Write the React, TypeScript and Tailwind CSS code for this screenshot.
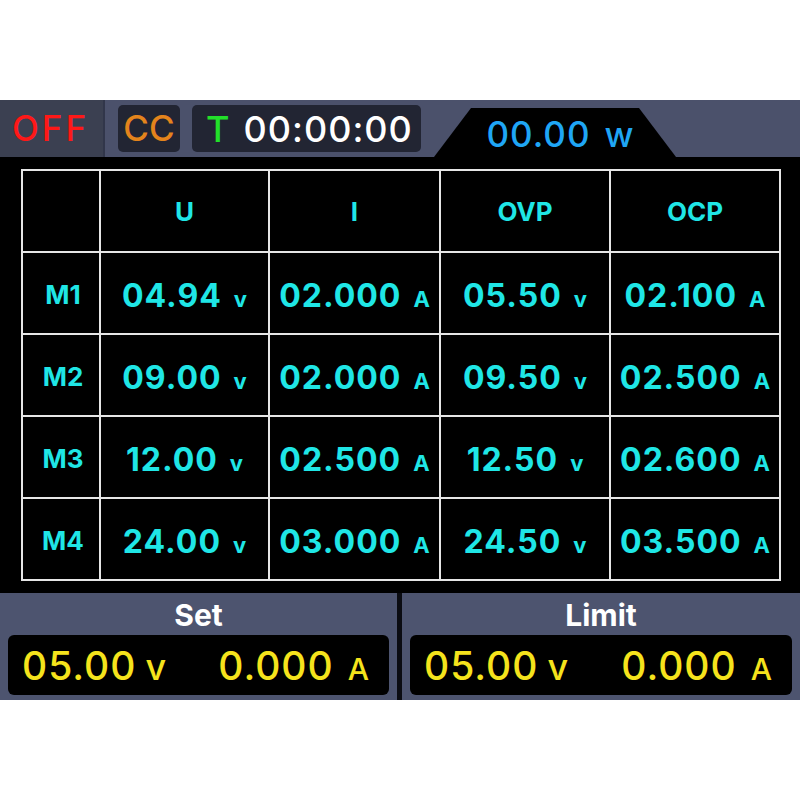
const font = "font-['Inter',sans-serif]";

type Cell = { value: string; unit: "v" | "A" };

const headers = ["U", "I", "OVP", "OCP"];

const rows: { name: string; cells: Cell[] }[] = [
  {
    name: "M1",
    cells: [
      { value: "04.94", unit: "v" },
      { value: "02.000", unit: "A" },
      { value: "05.50", unit: "v" },
      { value: "02.100", unit: "A" },
    ],
  },
  {
    name: "M2",
    cells: [
      { value: "09.00", unit: "v" },
      { value: "02.000", unit: "A" },
      { value: "09.50", unit: "v" },
      { value: "02.500", unit: "A" },
    ],
  },
  {
    name: "M3",
    cells: [
      { value: "12.00", unit: "v" },
      { value: "02.500", unit: "A" },
      { value: "12.50", unit: "v" },
      { value: "02.600", unit: "A" },
    ],
  },
  {
    name: "M4",
    cells: [
      { value: "24.00", unit: "v" },
      { value: "03.000", unit: "A" },
      { value: "24.50", unit: "v" },
      { value: "03.500", unit: "A" },
    ],
  },
];

function ValueCell({ value, unit }: Cell) {
  return (
    <div className="bg-black flex items-baseline justify-center pt-[27px] text-[#1fe6e6]">
      <span className="text-[32px] font-bold leading-none tracking-[1px]">{value}</span>
      <span className="ml-[12px] text-[22px] font-bold leading-none">{unit}</span>
    </div>
  );
}

function SetBox({ label }: { label: string }) {
  return (
    <div className="bg-[#4d546f] flex flex-col px-[8px] pb-[5px]">
      <div className="h-[42px] flex items-center justify-center pt-[2px] text-white text-[30px] font-bold">
        {label}
      </div>
      <div className="h-[60px] rounded-[6px] bg-black flex items-center justify-between pl-[14px] pr-[20px] text-[#f5e31c]">
        <div className="flex items-baseline">
          <span className="text-[39px] font-medium leading-none tracking-[1px]">05.00</span>
          <span className="ml-[9px] text-[36px] font-medium leading-none">v</span>
        </div>
        <div className="flex items-baseline">
          <span className="text-[39px] font-medium leading-none tracking-[1px]">0.000</span>
          <span className="ml-[14px] text-[30px] font-medium leading-none">A</span>
        </div>
      </div>
    </div>
  );
}

export default function App() {
  return (
    <div className={`w-[800px] h-[800px] bg-white pt-[100px] ${font}`}>
      {/* status bar */}
      <div className="h-[57px] flex bg-[#4b516b]">
        <div className="w-[105px] bg-[#3b4051] border-r-2 border-[#31364a] flex items-center pl-[12px]">
          <span className="text-[#ff1818] text-[35px] font-medium leading-none tracking-[3px]">OFF</span>
        </div>
        <div className="ml-[13px] mt-[5px] h-[47px] w-[62px] rounded-[5px] bg-[#222533] flex items-center justify-center">
          <span className="text-[#e4841c] text-[35px] font-medium leading-none">CC</span>
        </div>
        <div className="ml-[12px] mt-[5px] h-[47px] w-[229px] rounded-[5px] bg-[#222533] flex items-center pl-[14px]">
          <span className="text-[#22e02a] text-[36px] font-medium leading-none">T</span>
          <span className="ml-[14px] text-white text-[36px] font-medium leading-none tracking-[1px]">
            00:00:00
          </span>
        </div>
        <div className="ml-[13px] mt-[8px] w-[242px] h-[49px] bg-black [clip-path:polygon(37px_0,205px_0,100%_100%,0_100%)] flex items-center justify-center pl-[10px] pt-[4px]">
          <span className="text-[#1fa6f5] text-[35px] font-medium leading-none tracking-[1px]">00.00</span>
          <span className="ml-[14px] text-[#1fa6f5] text-[35px] font-medium leading-none">w</span>
        </div>
      </div>

      {/* channel memory table */}
      <div className="h-[436px] bg-black pl-[21px] pr-[19px] pt-[12px]">
        <div className="grid grid-cols-[76px_167px_169px_168px_168px] grid-rows-[repeat(5,80px)] gap-[2px] p-[2px] bg-[#e6e6e6]">
          <div className="bg-black" />
          {headers.map((h) => (
            <div
              key={h}
              className="bg-black flex items-center justify-center text-[#1fe6e6] text-[26px] font-bold"
            >
              {h}
            </div>
          ))}
          {rows.map((r) => (
            <>
              <div
                key={r.name}
                className="bg-black flex items-center justify-center pt-[2px] pl-[4px] text-[#1fe6e6] text-[26px] font-bold"
              >
                {r.name}
              </div>
              {r.cells.map((c, i) => (
                <ValueCell key={r.name + i} value={c.value} unit={c.unit} />
              ))}
            </>
          ))}
        </div>
      </div>

      {/* set / limit panels */}
      <div className="h-[107px] grid grid-cols-[397px_398px] gap-[5px] bg-[#0b0c12]">
        <SetBox label="Set" />
        <SetBox label="Limit" />
      </div>
    </div>
  );
}
